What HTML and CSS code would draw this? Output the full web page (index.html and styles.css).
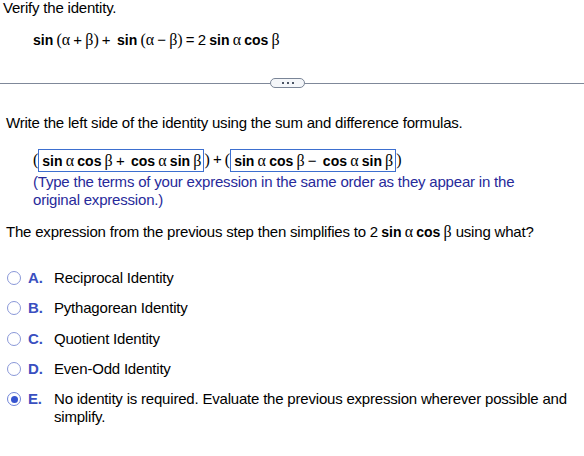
FILE: index.html
```html
<!DOCTYPE html>
<html>
<head>
<meta charset="utf-8">
<link rel="stylesheet" href="styles.css">
</head>
<body>
<div class="page">
  <p class="title">Verify the identity.</p>
  <p class="equation m"><b>sin</b> <span class="g">(α</span> + <span class="g">β)</span> + &nbsp;<b>sin</b> <span class="g">(α</span> − <span class="g">β)</span> = 2 <b>sin</b> <span class="g">α</span> <b>cos</b> <span class="g">β</span></p>

  <div class="divider">
    <span class="line left"></span>
    <span class="pill"><i></i><i></i><i></i></span>
    <span class="line right"></span>
  </div>

  <p class="prompt">Write the left side of the identity using the sum and difference formulas.</p>
  <div class="answer m"><span class="g">(</span><span class="box"><b>sin</b> <span class="g">α</span> <b>cos</b> <span class="g">β</span> + &nbsp;<b>cos</b> <span class="g">α</span> <b>sin</b> <span class="g">β</span></span><span class="g">)</span> + <span class="g">(</span><span class="box"><b>sin</b> <span class="g">α</span> <b>cos</b> <span class="g">β</span> − &nbsp;<b>cos</b> <span class="g">α</span> <b>sin</b> <span class="g">β</span></span><span class="g">)</span></div>
  <p class="hint">(Type the terms of your expression in the same order as they appear in the original expression.)</p>

  <p class="question">The expression from the previous step then simplifies to <span class="m">2 <b>sin</b> <span class="g">α</span> <b>cos</b> <span class="g">β</span></span> using what?</p>

  <ul class="options">
    <li><span class="radio"></span><span class="letter">A.</span><span class="text">Reciprocal Identity</span></li>
    <li><span class="radio"></span><span class="letter">B.</span><span class="text">Pythagorean Identity</span></li>
    <li><span class="radio"></span><span class="letter">C.</span><span class="text">Quotient Identity</span></li>
    <li><span class="radio"></span><span class="letter">D.</span><span class="text">Even-Odd Identity</span></li>
    <li><span class="radio checked"></span><span class="letter">E.</span><span class="text">No identity is required. Evaluate the previous expression wherever possible and simplify.</span></li>
  </ul>
</div>
</body>
</html>
```

FILE: styles.css
```css
html, body {
  margin: 0;
  padding: 0;
  background: #ffffff;
}
body {
  font-family: "Liberation Sans", Arial, sans-serif;
  font-size: 15px;
  color: #000;
  letter-spacing: -0.2px;
}
.page {
  width: 584px;
  height: 456px;
  overflow: hidden;
}
p { margin: 0; }
b { font-weight: bold; }
.m {
  word-spacing: -1px;
  letter-spacing: 0;
}
.m b {
  font-size: 14px;
}
.g {
  font-family: "Liberation Serif", "Times New Roman", serif;
  font-size: 16px;
}
.title {
  padding: 0 0 0 3px;
  line-height: 17px;
  margin-top: -1px;
}
.equation {
  margin: 15px 0 0 33px;
  line-height: 18px;
}
.divider {
  display: flex;
  align-items: center;
  margin-top: 29px;
  height: 10px;
}
.line {
  height: 1px;
  background: #7f8899;
}
.line.left { flex: 0 0 270px; }
.line.right { flex: 1; }
.pill {
  width: 33px;
  height: 8px;
  border: 1px solid #7a8597;
  border-radius: 5px;
  background: #f4f6f9;
  display: flex;
  align-items: center;
  justify-content: center;
  gap: 3px;
}
.pill i {
  width: 2px;
  height: 2px;
  background: #4b5566;
  display: block;
}
.prompt {
  margin: 26px 0 0 6px;
  line-height: 17px;
}
.answer {
  margin: 16px 0 0 33px;
  height: 24px;
  line-height: 24px;
  white-space: pre;
}
.box {
  display: inline-block;
  border: 1px solid #3d6fcf;
  height: 21px;
  line-height: 21px;
  padding: 0 2px 0 3px;
  vertical-align: middle;
  white-space: pre;
}
.answer > .g { vertical-align: middle; }
.hint {
  margin: 2px 0 0 33px;
  color: #272a9a;
  line-height: 18px;
  width: 520px;
}
.question {
  margin: 14px 0 0 6px;
  line-height: 18px;
}
.options {
  list-style: none;
  margin: 28px 0 0 0;
  padding: 0;
}
.options li {
  display: flex;
  align-items: flex-start;
  line-height: 18px;
  margin-bottom: 12.3px;
}
.radio {
  width: 12px;
  height: 12px;
  border: 1.5px solid #8a98d8;
  border-radius: 50%;
  margin: 2px 0 0 7px;
  flex: none;
  box-sizing: content-box;
  position: relative;
}
.radio.checked {
  border-color: #6f84d8;
}
.radio.checked::after {
  content: "";
  position: absolute;
  left: 2.5px;
  top: 2.5px;
  width: 7px;
  height: 7px;
  border-radius: 50%;
  background: #3553cf;
}
.letter {
  color: #3a4fc0;
  font-weight: bold;
  width: 26px;
  padding-left: 7px;
  flex: none;
}
.text {
  width: 525px;
}
```
